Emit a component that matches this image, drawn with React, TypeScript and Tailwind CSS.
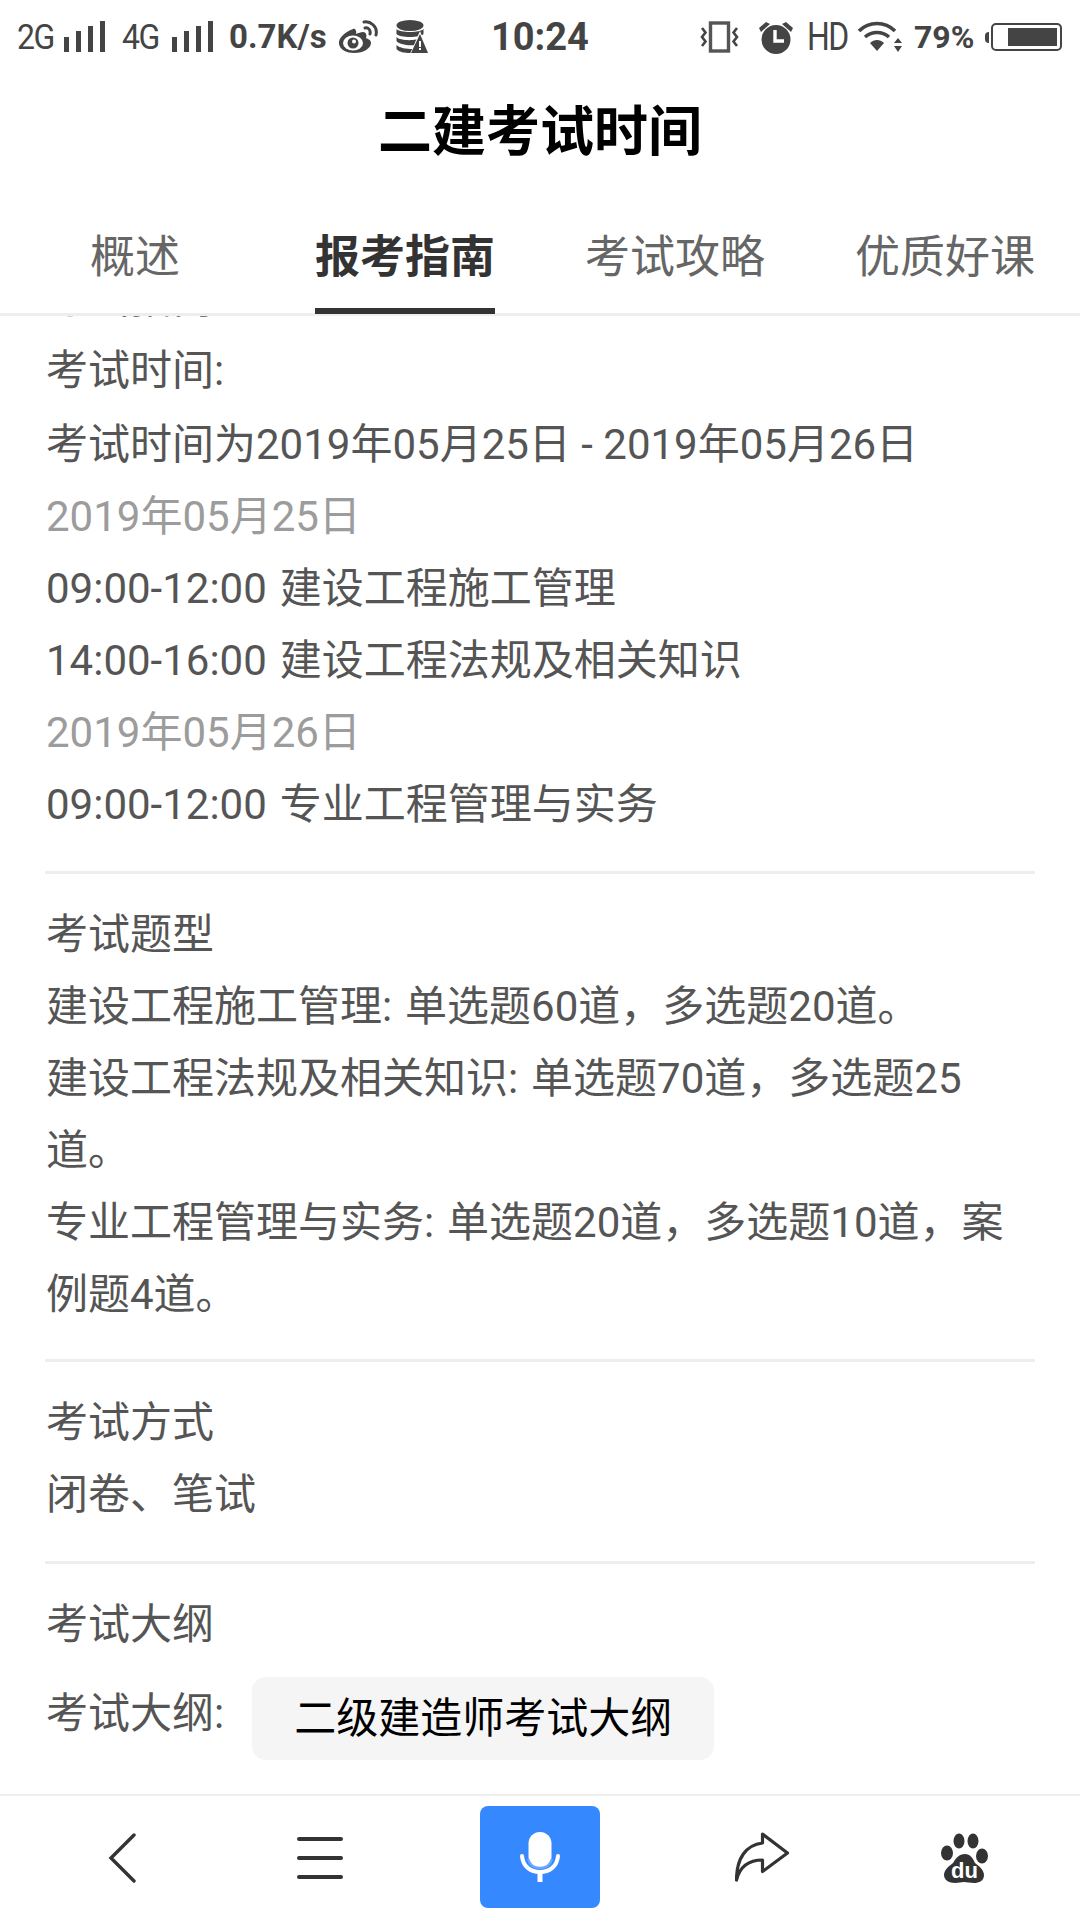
function Signal() {
  return (
    <svg width="42" height="32" viewBox="0 0 42 32" className="block">
      <g fill="#444">
        <rect x="0" y="16" width="5" height="15" />
        <rect x="12" y="10" width="5" height="21" />
        <rect x="24" y="5" width="5" height="26" />
        <rect x="36" y="0" width="5" height="31" />
      </g>
    </svg>
  );
}
function Weibo() {
  return (
    <svg width="42" height="34" viewBox="0 0 42 34" className="block">
      <path fill="#444" d="M15 9C7 12 0 18 1 24c1 6 8 9 15 9 10 0 17-5 17-10 0-3-3-4-5-5 1-3 0-6-3-6-2 0-5 1-7 2 1-3-1-6-3-5z" />
      <ellipse cx="15" cy="23" rx="10" ry="7.500" fill="#fff" />
      <circle cx="15" cy="23" r="5.500" fill="#444" />
      <circle cx="16" cy="21.500" r="2" fill="#fff" />
      <path fill="none" stroke="#444" strokeWidth="3" strokeLinecap="round" d="M26 2c6-1 14 4 12 13M27 8c3-1 6 2 5 6" />
    </svg>
  );
}
function Db() {
  return (
    <svg width="33" height="34" viewBox="0 0 33 34" className="block">
      <ellipse cx="14" cy="5.500" rx="13.500" ry="5.500" fill="#444" />
      <path fill="#444" d="M0.500 9c3 4 24 4 27 0v5c-3 4-24 4-27 0zM0.500 17c3 4 20 4 24 1l-5 7c-8 1-17-1-19-4zM0.500 25c3 3 10 4 16 4l-2 4C8 33 3 32 0.500 29z" />
      <path fill="#fff" d="M24 11l9 23H14z" />
      <path fill="#444" d="M24 14l8 19H15z" />
      <rect x="23" y="21" width="2" height="6" fill="#fff" />
      <rect x="23" y="28" width="2" height="2" fill="#fff" />
    </svg>
  );
}
function Vibrate() {
  return (
    <svg width="39" height="32" viewBox="0 0 39 32" className="block">
      <rect x="10.500" y="2" width="18" height="28" fill="none" stroke="#555" strokeWidth="3.400" />
      <path fill="none" stroke="#444" strokeWidth="2.600" d="M2 7l3.500 4.500L2 16l3.500 4.500L2 25M37 7l-3.500 4.500L37 16l-3.500 4.500L37 25" />
    </svg>
  );
}
function Alarm() {
  return (
    <svg width="34" height="33" viewBox="0 0 34 33" className="block">
      <circle cx="17" cy="18.500" r="14.500" fill="#444" />
      <path fill="#444" d="M0 7l7-6 4 2-9 8zM34 7l-7-6-4 2 9 8z" />
      <path fill="none" stroke="#fff" strokeWidth="3.400" d="M16 9v11h9" />
    </svg>
  );
}
function Wifi() {
  return (
    <svg width="45" height="32" viewBox="0 0 45 32" className="block">
      <g fill="none" stroke="#444" strokeWidth="3.600">
        <path d="M1 10C11 0 27 0 37 10" />
        <path d="M7 16c7-6 17-6 24 0" />
      </g>
      <path fill="#444" d="M12 22c4-4 10-4 14 0l-7 8z" />
      <path fill="#444" d="M36 22h8l-4-5zM36 25h8l-4 6z" />
    </svg>
  );
}
function Line({ children, gray, wide }: { children: React.ReactNode; gray?: boolean; wide?: boolean }) {
  return (
    <div className={`h-[72px] leading-[72px] whitespace-nowrap ${gray ? "text-[#9c9c9c]" : ""} ${wide ? "[word-spacing:2.500px]" : ""}`}>
      {children}
    </div>
  );
}
export default function App() {
  return (
    <div className="w-[1080px] h-[1920px] bg-white overflow-hidden flex flex-col relative [font-family:Roboto,'Noto_Sans_CJK_SC',sans-serif]">
      <div className="relative z-10 bg-white shrink-0">
        <div className="h-[74px] flex items-center text-[#444] pl-[17px] whitespace-nowrap">
          <span className="shrink-0 w-[37px] text-[32px] tracking-[-1.500px] scale-y-[1.1]">2G</span>
          <span className="shrink-0 ml-[10px]"><Signal /></span>
          <span className="shrink-0 ml-[16px] w-[39px] text-[32px] tracking-[-1.500px] scale-y-[1.1]">4G</span>
          <span className="shrink-0 ml-[11px]"><Signal /></span>
          <span className="shrink-0 ml-[15px] w-[101px] text-[33px] font-bold">0.7K/s</span>
          <span className="shrink-0 ml-[8px]"><Weibo /></span>
          <span className="shrink-0 ml-[16px]"><Db /></span>
          <span className="shrink-0 ml-[62px] w-[96px] text-[38px] font-bold text-center">10:24</span>
          <span className="shrink-0 ml-[113px]"><Vibrate /></span>
          <span className="shrink-0 ml-[20px]"><Alarm /></span>
          <span className="shrink-0 ml-[14px] w-[42px] text-[32px] tracking-[-1.500px] scale-y-[1.2]">HD</span>
          <span className="shrink-0 ml-[9px]"><Wifi /></span>
          <span className="shrink-0 ml-[11px] w-[61px] text-[32px] font-bold">79%</span>
          <div className="shrink-0 ml-[10px] w-[4px] h-[11px] bg-[#444] rounded-l-sm" />
          <div className="shrink-0 ml-[2px] w-[71px] h-[28px] border-[2px] border-[#444] rounded-[5px] flex justify-end p-[3px]">
            <div className="w-[49px] h-full bg-[#444]" />
          </div>
        </div>
        <div className="h-[115px] pt-[2px] flex items-center justify-center text-[54px] font-bold text-black leading-none">二建考试时间</div>
        <div className="grid grid-cols-4 h-[127px] pt-[12px] border-b-[3px] border-[#eeeeee] text-[45px] text-[#666] leading-none">
          <div className="flex items-center justify-center">概述</div>
          <div className="relative flex items-center justify-center font-bold text-[#333]">
            报考指南
            <div className="absolute left-[45px] right-[45px] bottom-[-1px] h-[6px] bg-[#333]" />
          </div>
          <div className="flex items-center justify-center">考试攻略</div>
          <div className="flex items-center justify-center">优质好课</div>
        </div>
      </div>

      <div className="flex-1 min-h-0 overflow-hidden px-[46px] text-[#555] text-[42px]">
        <div className="h-[19px] overflow-hidden">
          <div className="mt-[-53px]"><Line>考试指南</Line></div>
        </div>
        <div className="h-[74px] leading-[72px] whitespace-nowrap">考试时间:</div>
        <Line>考试时间为2019年05月25日 - 2019年05月26日</Line>
        <Line gray>2019年05月25日</Line>
        <Line wide>09:00-12:00 建设工程施工管理</Line>
        <Line wide>14:00-16:00 建设工程法规及相关知识</Line>
        <Line gray>2019年05月26日</Line>
        <Line wide>09:00-12:00 专业工程管理与实务</Line>
        <div className="mt-[30px] mb-[25px] h-[3px] bg-[#eeeeee] mx-[-1px]" />
        <Line>考试题型</Line>
        <Line wide>建设工程施工管理: 单选题60道，多选题20道。</Line>
        <Line wide>建设工程法规及相关知识: 单选题70道，多选题25</Line>
        <Line>道。</Line>
        <Line wide>专业工程管理与实务: 单选题20道，多选题10道，案</Line>
        <Line>例题4道。</Line>
        <div className="mt-[28px] mb-[25px] h-[3px] bg-[#eeeeee] mx-[-1px]" />
        <Line>考试方式</Line>
        <Line>闭卷、笔试</Line>
        <div className="mt-[30px] mb-[25px] h-[3px] bg-[#eeeeee] mx-[-1px]" />
        <Line>考试大纲</Line>
        <div className="flex items-center mt-[16px]">
          <span className="mb-[10px]">考试大纲:</span>
          <div className="ml-[28px] w-[462px] h-[83px] rounded-[14px] bg-[#f5f5f5] flex items-center justify-center text-black">二级建造师考试大纲</div>
        </div>
      </div>

      <div className="shrink-0 h-[126px] bg-white border-t-[2px] border-[#eeeeee] relative z-10 flex items-center pl-[108px]">
        <svg width="28" height="50" viewBox="0 0 28 50" className="shrink-0 block">
          <path d="M26 2L3 25l23 23" fill="none" stroke="#333" strokeWidth="3.400" strokeLinecap="round" />
        </svg>
        <div className="shrink-0 ml-[161px] w-[46px] flex flex-col gap-[15px]">
          <div className="h-[4px] rounded bg-[#333]" />
          <div className="h-[4px] rounded bg-[#333]" />
          <div className="h-[4px] rounded bg-[#333]" />
        </div>
        <div className="shrink-0 ml-[137px] mb-[2px] w-[120px] h-[102px] rounded-[8px] bg-[#3688ff] flex items-center justify-center">
          <svg width="40" height="50" viewBox="0 0 40 50" className="block">
            <rect x="8.500" y="0" width="23" height="36" rx="11.500" fill="#fff" />
            <path d="M2 24c1 11 9 16 18 16s17-5 18-16" fill="none" stroke="#fff" strokeWidth="4" strokeLinecap="round" />
            <path d="M8 27c2 7 7 9 12 9s10-2 12-9" fill="none" stroke="#6aa8ff" strokeWidth="2.500" />
            <rect x="17.500" y="40" width="5" height="10" fill="#fff" />
          </svg>
        </div>
        <svg width="55" height="52" viewBox="0 0 55 52" className="shrink-0 block ml-[135px]">
          <path d="M27.500 2L52.500 21 27.500 39.500V28C15 28 5 34 1.500 48 1.500 26 11 13 27.500 11z" fill="none" stroke="#333" strokeWidth="3.200" strokeLinejoin="round" />
        </svg>
        <svg width="47" height="51" viewBox="0 0 47 51" className="shrink-0 block ml-[151px]">
          <g fill="#333">
            <ellipse cx="6" cy="20" rx="6" ry="7.500" />
            <ellipse cx="18" cy="8" rx="5.500" ry="7.500" />
            <ellipse cx="32" cy="8" rx="5.500" ry="7.500" />
            <ellipse cx="41" cy="23" rx="6" ry="7.500" />
            <path d="M24 21c5 0 8 4 10 9 4 3 9 7 9 12 0 6-5 8-10 8-4 0-7-1-10-1s-5 1-9 1c-6 0-11-3-11-8 0-5 5-9 9-12 3-5 6-9 12-9z" />
          </g>
          <text x="23.500" y="45" textAnchor="middle" fill="#fff" fontSize="22" fontWeight="700" fontFamily="Liberation Sans, sans-serif">du</text>
        </svg>
      </div>
    </div>
  );
}
